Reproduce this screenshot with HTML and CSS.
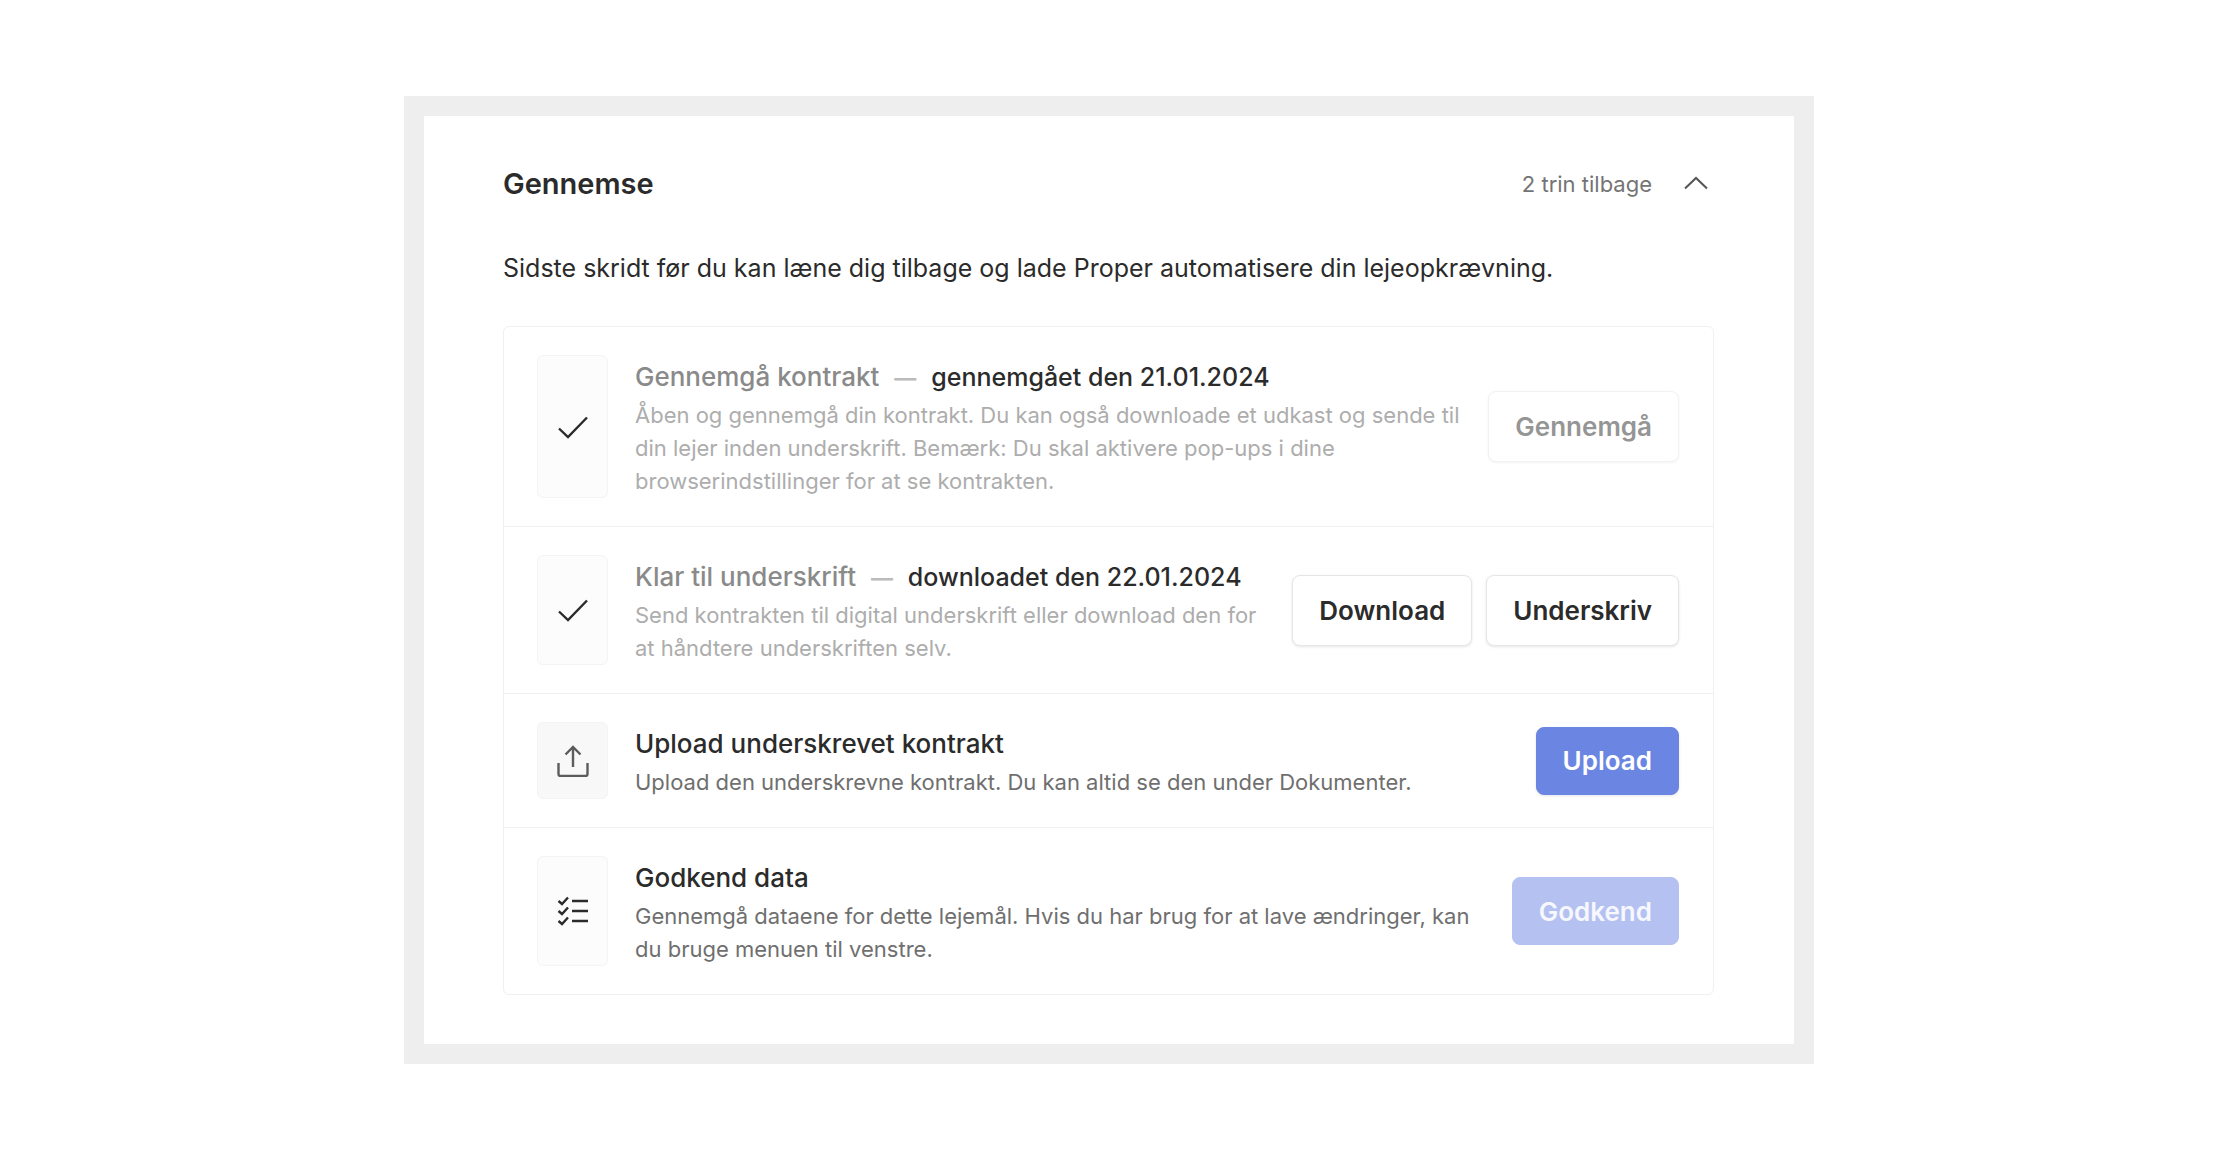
FILE: index.html
```html
<!DOCTYPE html>
<html lang="da">
<head>
<meta charset="utf-8">
<meta name="viewport" content="width=device-width, initial-scale=1">
<title>Gennemse</title>
<link rel="stylesheet" href="styles.css">
</head>
<body>
<main class="card">
  <header class="card-header">
    <h1 class="card-title">Gennemse</h1>
    <span class="remaining">2 trin tilbage</span>
    <button class="toggle" type="button" aria-label="Skjul" aria-expanded="true">
      <svg class="chevron" viewBox="0 0 28 16" aria-hidden="true"><path d="M3 12.500 14 2l11 10.500"/></svg>
    </button>
  </header>
  <p class="intro">Sidste skridt før du kan læne dig tilbage og lade Proper automatisere din lejeopkrævning.</p>

  <ul class="steps">
    <li class="step step-done">
      <div class="step-icon">
        <svg class="icon" viewBox="0 0 32 32" aria-hidden="true"><path d="M2 17.500 11 26 30 6.500"/></svg>
      </div>
      <div class="step-body">
        <h2 class="step-title">Gennemgå kontrakt <span class="dash">—</span> <span class="status">gennemgået den 21.01.2024</span></h2>
        <p class="step-text">Åben og gennemgå din kontrakt. Du kan også downloade et udkast og sende til din lejer inden underskrift. Bemærk: Du skal aktivere pop-ups i dine browserindstillinger for at se kontrakten.</p>
      </div>
      <div class="actions">
        <button class="button" type="button" disabled>Gennemgå</button>
      </div>
    </li>
    <li class="step step-done">
      <div class="step-icon">
        <svg class="icon" viewBox="0 0 32 32" aria-hidden="true"><path d="M2 17.500 11 26 30 6.500"/></svg>
      </div>
      <div class="step-body">
        <h2 class="step-title">Klar til underskrift <span class="dash">—</span> <span class="status">downloadet den 22.01.2024</span></h2>
        <p class="step-text">Send kontrakten til digital underskrift eller download den for at håndtere underskriften selv.</p>
      </div>
      <div class="actions">
        <button class="button" type="button">Download</button>
        <button class="button" type="button">Underskriv</button>
      </div>
    </li>
    <li class="step">
      <div class="step-icon step-icon-active">
        <svg class="icon icon-upload" viewBox="0 0 32 32" aria-hidden="true"><path d="M16 22V2M8.500 9.500 16 2l7.500 7.500M1.500 18v11q0 2 2 2h25q2 0 2-2V18"/></svg>
      </div>
      <div class="step-body">
        <h2 class="step-title">Upload underskrevet kontrakt</h2>
        <p class="step-text">Upload den underskrevne kontrakt. Du kan altid se den under Dokumenter.</p>
      </div>
      <div class="actions">
        <button class="button button-primary" type="button">Upload</button>
      </div>
    </li>
    <li class="step">
      <div class="step-icon">
        <svg class="icon" viewBox="0 0 32 32" aria-hidden="true"><path d="M15 6h16M15 16h16M15 26h16M1.500 6l3.500 3 6-6.500M1.500 16l3.500 3 6-6.500M1.500 26l3.500 3 6-6.500"/></svg>
      </div>
      <div class="step-body">
        <h2 class="step-title">Godkend data</h2>
        <p class="step-text">Gennemgå dataene for dette lejemål. Hvis du har brug for at lave ændringer, kan du bruge menuen til venstre.</p>
      </div>
      <div class="actions">
        <button class="button button-primary" type="button" disabled>Godkend</button>
      </div>
    </li>
  </ul>
</main>
</body>
</html>
```
FILE: styles.css
```css
* {
  box-sizing: border-box;
}

body {
  margin: 0;
  padding: 96px 26px 96px 24px;
  background: #fff;
  color: #2b2b2b;
  font-family: Inter, "Liberation Sans", sans-serif;
}

h1,
h2,
p,
ul {
  margin: 0;
  padding: 0;
}

.card {
  max-width: 1410px;
  margin: 0 auto;
  padding: 48px 80px 49px 79px;
  border: 20px solid #eee;
}

.card-header {
  display: flex;
  align-items: center;
  height: 40px;
}

.card-title {
  flex: 1;
  font-size: 29px;
  font-weight: 600;
  line-height: 40px;
}

.remaining {
  color: #747474;
  font-size: 22px;
  line-height: 32px;
}

.toggle {
  display: flex;
  margin: 0 4px 0 30px;
  padding: 0;
  border: 0;
  background: none;
}

.chevron {
  width: 28px;
  height: 16px;
  fill: none;
  stroke: #555;
  stroke-width: 2;
}

.intro {
  margin: 44px 0 38px;
  font-size: 25px;
  line-height: 40px;
}

.steps {
  border: 1px solid #f0f0f0;
  border-radius: 6px;
  list-style: none;
}

.step {
  display: flex;
  padding: 28px 34px 28px 33px;
}

.step + .step {
  border-top: 1px solid #f0f0f0;
}

.step-icon {
  display: flex;
  flex: none;
  align-items: center;
  justify-content: center;
  width: 71px;
  border: 1px solid #f4f4f4;
  border-radius: 6px;
  background: #fcfcfc;
}

.step-icon-active {
  background: #f8f8f8;
}

.icon {
  width: 32px;
  height: 32px;
  fill: none;
  stroke: #2b2b2b;
  stroke-width: 2.4;
}

.icon-upload {
  stroke: #5c5c5c;
}

.step-body {
  flex: 1;
  margin: 0 14px 0 27px;
}

.step-title {
  font-size: 26px;
  font-weight: 500;
  line-height: 44px;
}

.step-text {
  color: #6f6f6f;
  font-size: 22px;
  line-height: 33px;
}

.step-done .step-title {
  color: #8a8a8a;
}

.step-done .step-text {
  color: #adadad;
}

.dash {
  margin: 0 8px;
  color: #bbb;
  font-size: 22px;
  font-weight: 700;
  line-height: 1;
}

.step-title .status {
  color: #2b2b2b;
  font-size: 25px;
  line-height: 1;
}

.actions {
  display: flex;
  align-items: center;
  gap: 14px;
}

.button {
  height: 71px;
  padding: 0 26px;
  border: 1px solid #e6e6e6;
  border-radius: 8px;
  background: #fff;
  box-shadow: 0 1px 3px rgba(0, 0, 0, 0.1);
  color: #2b2b2b;
  font: 600 26px Inter, "Liberation Sans", sans-serif;
}

.button:disabled {
  border-color: #f2f2f2;
  box-shadow: 0 1px 3px rgba(0, 0, 0, 0.05);
  color: #959595;
}

.button-primary {
  height: 68px;
  border-color: #6b86e2;
  background: #6b86e2;
  color: #fff;
}

.button-primary:disabled {
  border-color: #b5c1f1;
  background: #b5c1f1;
  box-shadow: none;
  color: #f6f8fe;
}
```
